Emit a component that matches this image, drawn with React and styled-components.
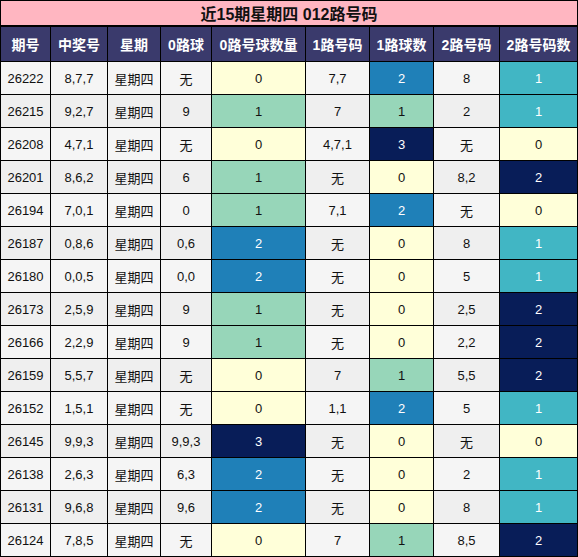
import React from "react";
import styled, { createGlobalStyle } from "styled-components";

const Global = createGlobalStyle`
  html, body { margin: 0; padding: 0; background: #ffffff; }
  body { font-family: "Liberation Sans", Arial, "Noto Sans CJK SC", sans-serif; }
`;

const Grid = styled.div`
  display: grid;
  grid-template-columns: 49px 56px 52px 50px 93px 63px 63px 65px 77px;
  grid-template-rows: 25px 34px repeat(15, 32px);
  gap: 1px;
  padding: 1px;
  background: #000;
  width: 578px;
  box-sizing: border-box;
`;

const Title = styled.div`
  grid-column: 1 / -1;
  box-sizing: border-box;
  border-bottom: 1px solid #000;
  background: #ffb6c1;
  color: #111;
  font-weight: bold;
  font-size: 16px;
  display: flex;
  align-items: center;
  justify-content: center;
`;

const Head = styled.div`
  background: #3a3a6c;
  color: #fff;
  font-weight: bold;
  font-size: 14px;
  display: flex;
  align-items: center;
  justify-content: center;
  white-space: nowrap;
`;

const palette = {
  y: { bg: "#ffffd9", fg: "#111" },
  g: { bg: "#97d6b9", fg: "#111" },
  b: { bg: "#1f80b8", fg: "#fff" },
  n: { bg: "#081d58", fg: "#fff" },
  t: { bg: "#41b6c4", fg: "#fff" },
};

const Cell = styled.div`
  background: ${(p) => (p.$tone ? palette[p.$tone].bg : p.$alt ? "#efefef" : "#f5f5f5")};
  color: ${(p) => (p.$tone ? palette[p.$tone].fg : "#111")};
  font-size: 13px;
  display: flex;
  align-items: center;
  justify-content: center;
  white-space: nowrap;
`;

const headers = ["期号", "中奖号", "星期", "0路球", "0路号球数量", "1路号码", "1路球数", "2路号码", "2路号码数"];

const rows = [
  ["26222", "8,7,7", "无", 0, "7,7", 2, "8", 1],
  ["26215", "9,2,7", "9", 1, "7", 1, "2", 1],
  ["26208", "4,7,1", "无", 0, "4,7,1", 3, "无", 0],
  ["26201", "8,6,2", "6", 1, "无", 0, "8,2", 2],
  ["26194", "7,0,1", "0", 1, "7,1", 2, "无", 0],
  ["26187", "0,8,6", "0,6", 2, "无", 0, "8", 1],
  ["26180", "0,0,5", "0,0", 2, "无", 0, "5", 1],
  ["26173", "2,5,9", "9", 1, "无", 0, "2,5", 2],
  ["26166", "2,2,9", "9", 1, "无", 0, "2,2", 2],
  ["26159", "5,5,7", "无", 0, "7", 1, "5,5", 2],
  ["26152", "1,5,1", "无", 0, "1,1", 2, "5", 1],
  ["26145", "9,9,3", "9,9,3", 3, "无", 0, "无", 0],
  ["26138", "2,6,3", "6,3", 2, "无", 0, "2", 1],
  ["26131", "9,6,8", "9,6", 2, "无", 0, "8", 1],
  ["26124", "7,8,5", "无", 0, "7", 1, "8,5", 2],
];

const tone3 = ["y", "g", "b", "n"];
const tone2 = ["y", "t", "n"];

export default function App() {
  return (
    <>
      <Global />
      <Grid>
        <Title>近15期星期四 012路号码</Title>
        {headers.map((h) => (
          <Head key={h}>{h}</Head>
        ))}
        {rows.map((r, i) => {
          const alt = i % 2 === 1;
          return (
            <React.Fragment key={r[0]}>
              <Cell $alt={alt}>{r[0]}</Cell>
              <Cell $alt={alt}>{r[1]}</Cell>
              <Cell $alt={alt}>星期四</Cell>
              <Cell $alt={alt}>{r[2]}</Cell>
              <Cell $tone={tone3[r[3]]}>{r[3]}</Cell>
              <Cell $alt={alt}>{r[4]}</Cell>
              <Cell $tone={tone3[r[5]]}>{r[5]}</Cell>
              <Cell $alt={alt}>{r[6]}</Cell>
              <Cell $tone={tone2[r[7]]}>{r[7]}</Cell>
            </React.Fragment>
          );
        })}
      </Grid>
    </>
  );
}
